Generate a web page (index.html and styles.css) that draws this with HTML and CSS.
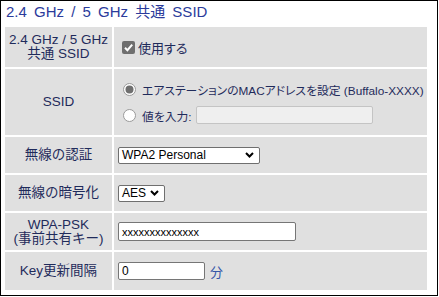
FILE: index.html
```html
<!DOCTYPE html>
<html lang="ja">
<head>
<meta charset="utf-8">
<title>2.4 GHz / 5 GHz 共通 SSID</title>
<link rel="stylesheet" href="styles.css">
</head>
<body>
<div class="frame">
  <h1 class="title">2.4 GHz / 5 GHz 共通 SSID</h1>
  <div class="grid">
    <div class="lbl">2.4 GHz / 5 GHz<br>共通 SSID</div>
    <div class="val">
      <span class="cb"><svg width="13" height="13" viewBox="0 0 13 13"><rect x="0" y="0" width="13" height="13" rx="2" fill="#6f6f6f"/><path d="M3 6.8 L5.4 9.2 L10.2 3.6" fill="none" stroke="#fff" stroke-width="2"/></svg></span>
      <span>使用する</span>
    </div>

    <div class="lbl">SSID</div>
    <div class="val col">
      <div class="opt">
        <span class="radio"><svg width="13" height="13" viewBox="0 0 13 13"><circle cx="6.5" cy="6.5" r="6" fill="#fff" stroke="#9a9a9a"/><circle cx="6.5" cy="6.5" r="4" fill="#6f6f6f"/></svg></span>
        <span class="optxt">エアステーションのMACアドレスを設定 (Buffalo-XXXX)</span>
      </div>
      <div class="opt">
        <span class="radio"><svg width="13" height="13" viewBox="0 0 13 13"><circle cx="6.5" cy="6.5" r="6" fill="#fff" stroke="#9a9a9a"/></svg></span>
        <span class="optxt">値を入力:</span>
        <span class="field off"></span>
      </div>
    </div>

    <div class="lbl">無線の認証</div>
    <div class="val">
      <span class="select wide"><span>WPA2 Personal</span><svg width="9" height="6" viewBox="0 0 9 6"><path d="M1 1 L4.5 4.5 L8 1" fill="none" stroke="#000" stroke-width="2"/></svg></span>
    </div>

    <div class="lbl">無線の暗号化</div>
    <div class="val">
      <span class="select narrow"><span>AES</span><svg width="9" height="6" viewBox="0 0 9 6"><path d="M1 1 L4.5 4.5 L8 1" fill="none" stroke="#000" stroke-width="2"/></svg></span>
    </div>

    <div class="lbl">WPA-PSK<br>(事前共有キー)</div>
    <div class="val">
      <span class="field psk">xxxxxxxxxxxxxx</span>
    </div>

    <div class="lbl">Key更新間隔</div>
    <div class="val">
      <span class="field key">0</span>
      <span class="unit">分</span>
    </div>
  </div>
</div>
</body>
</html>
```
FILE: styles.css
```css
* { box-sizing: border-box; }
html, body { margin: 0; padding: 0; background: #fff; }
body { font-family: "Liberation Sans", "Noto Sans CJK JP", sans-serif; }

.frame {
  width: 438px;
  height: 296px;
  border: 1px solid #000;
  background: #fff;
}

.title {
  margin: 0 0 4px 0;
  padding: 1px 0 0 5px;
  height: 22px;
  font-size: 15px;
  line-height: 20px;
  font-weight: normal;
  color: #2b3b9b;
  word-spacing: 3px;
}

.grid {
  margin-left: 4px;
  display: grid;
  grid-template-columns: 107px 313px;
  grid-template-rows: 40px 66px 36px 36px 37px 38px;
  gap: 2px;
}

.lbl {
  background: #e0e0e0;
  display: flex;
  align-items: center;
  justify-content: center;
  text-align: center;
  font-size: 13.5px;
  line-height: 14px;
  color: #1f2b5b;
}

.val {
  background: #e0e0e0;
  display: flex;
  align-items: center;
  padding-left: 4px;
  font-size: 13px;
  color: #1f2b5b;
  font-feature-settings: "palt";
  white-space: nowrap;
}

.val.col {
  flex-direction: column;
  justify-content: center;
  align-items: flex-start;
}

.cb { display: flex; margin: 0 3px 0 4px; }
.cb svg, .radio svg { display: block; }

.opt {
  display: flex;
  align-items: center;
  height: 26px;
}

.radio { display: flex; margin: 0 6px 0 5px; }
.optxt { font-size: 11.8px; white-space: nowrap; }

.field {
  display: inline-flex;
  align-items: center;
  background: #fff;
  border: 1px solid #767676;
  border-radius: 2px;
  padding-left: 3px;
  color: #000;
  font-size: 12px;
  font-feature-settings: normal;
}
.field.off {
  width: 177px;
  height: 18px;
  margin-left: 4px;
  background: #efefef;
  border-color: #c4c4c4;
}
.field.psk { width: 178px; height: 19px; font-size: 11px; }
.field.key { width: 87px; height: 18px; }

.unit { margin-left: 5px; color: #3556a8; font-size: 13px; }

.select {
  display: inline-flex;
  align-items: center;
  justify-content: space-between;
  height: 17px;
  background: #fff;
  border: 1px solid #6f6f6f;
  border-radius: 2px;
  padding: 0 5px 0 3px;
  color: #000;
  font-size: 12px;
  font-feature-settings: normal;
}
.select svg { display: block; }
.select.wide { width: 142px; }
.select.narrow { width: 47px; }
```
